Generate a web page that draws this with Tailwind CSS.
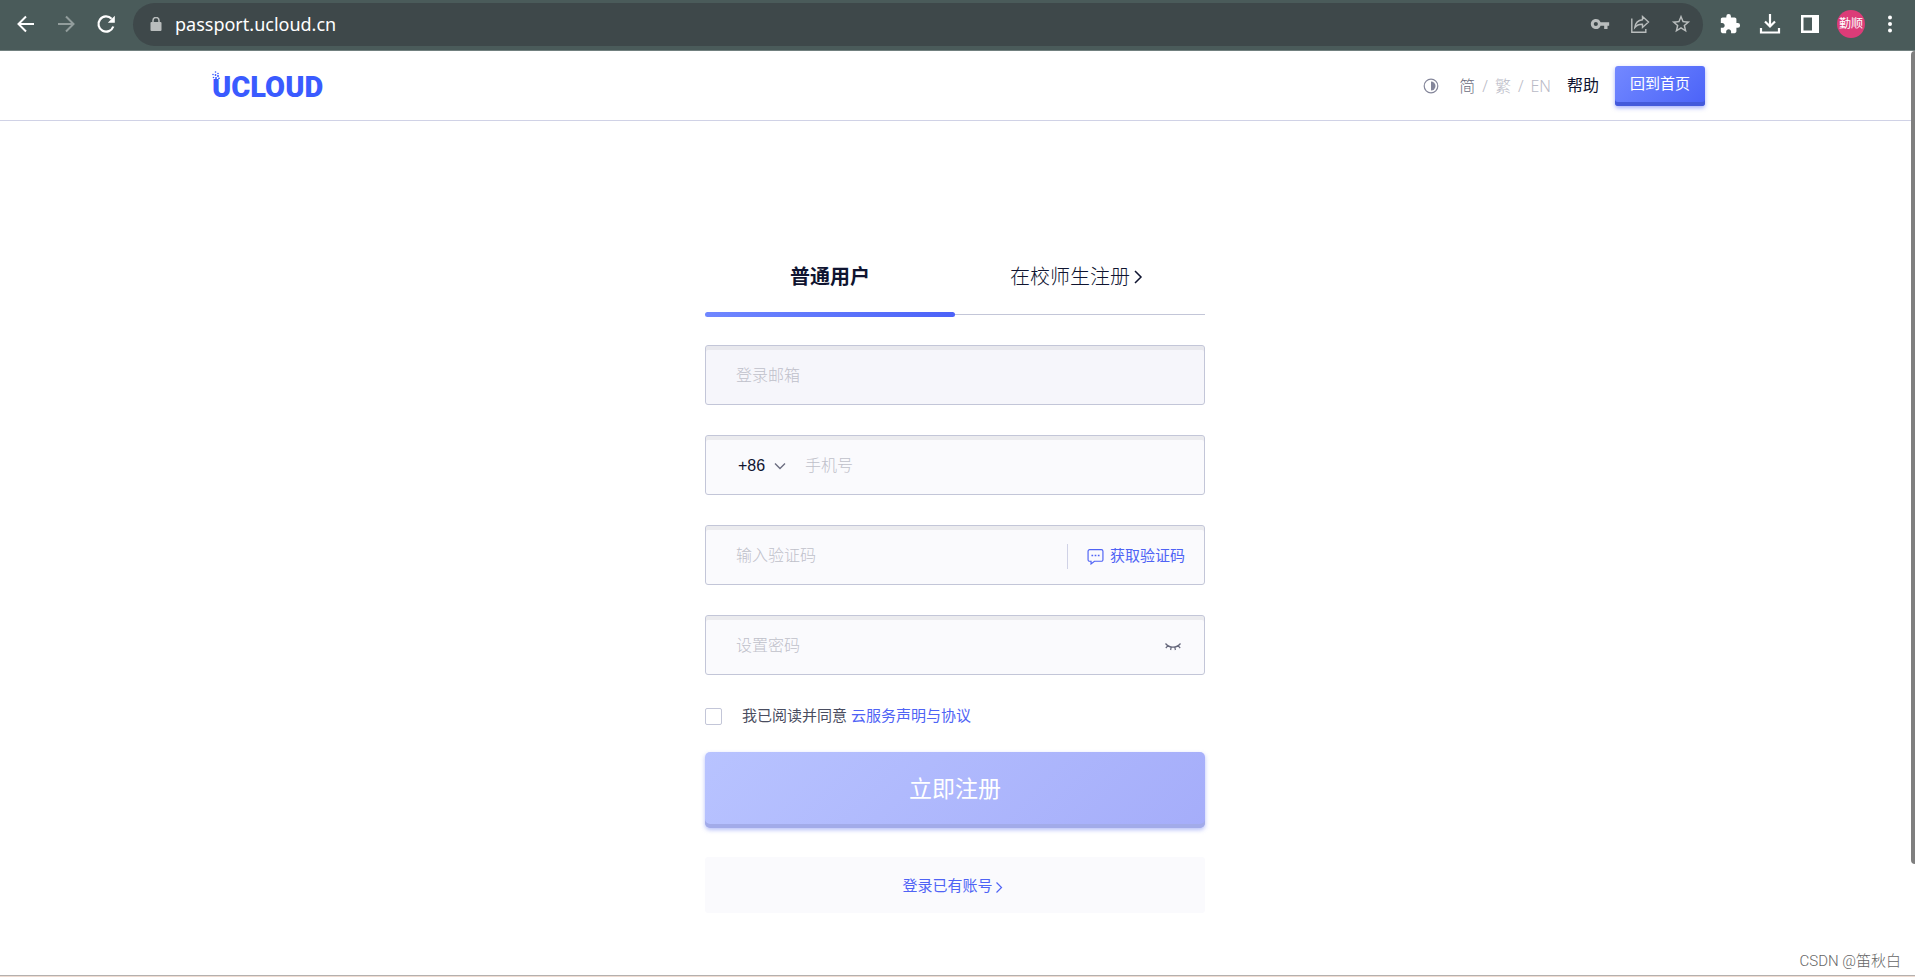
<!DOCTYPE html>
<html lang="zh-CN">
<head>
<meta charset="utf-8">
<meta name="viewport" content="width=device-width, initial-scale=1">
<title>UCloud</title>
<script src="https://cdn.jsdelivr.net/npm/@tailwindcss/browser@4"></script>
</head>
<body class="flex min-h-screen flex-col bg-white font-['Liberation_Sans','Noto_Sans_CJK_SC',sans-serif] text-[#0f1430]">

<!-- Browser toolbar -->
<div class="flex h-[51px] shrink-0 items-center border-b border-[#71807f] bg-[#4a5b5a] pr-[14px] pb-[2px] pl-[14px] text-white">
  <nav class="flex items-center gap-4" aria-label="浏览器导航">
    <button type="button" aria-label="后退"><svg class="size-6" viewBox="0 0 24 24" fill="none" stroke="currentColor" stroke-width="2"><path d="M20 12H5M12 4.500 4.500 12 12 19.500"/></svg></button>
    <button type="button" aria-label="前进" class="text-[#929d9c]"><svg class="size-6" viewBox="0 0 24 24" fill="none" stroke="currentColor" stroke-width="2"><path d="M4 12h15M12 4.500 19.500 12 12 19.500"/></svg></button>
    <button type="button" aria-label="重新加载"><svg class="size-6" viewBox="0 0 24 24" fill="none" stroke="currentColor" stroke-width="2.200"><path d="M19.300 14.500A7.600 7.600 0 1 1 17.600 6.800"/><path d="M20.800 3.800v7h-7z" fill="currentColor" stroke="none"/></svg></button>
  </nav>
  <div class="ml-[15px] flex h-[43px] flex-1 items-center rounded-full bg-[#3e484a] pr-[11px] pl-4 text-[#b9bdbd]">
    <svg class="size-[14px]" viewBox="0 0 14 14"><rect x="1.500" y="5" width="11" height="9" rx="1" fill="currentColor"/><path d="M4 5.500V3.500a3 3 0 0 1 6 0v2" fill="none" stroke="currentColor" stroke-width="1.500"/></svg>
    <input type="text" aria-label="地址" value="passport.ucloud.cn" class="ml-3 min-w-0 flex-1 bg-transparent font-['Noto_Sans',sans-serif] text-lg text-white outline-none">
    <div class="flex items-center gap-5">
      <button type="button" aria-label="密码"><svg class="size-5" viewBox="0 0 24 24" fill="currentColor"><path d="M12.700 10A6 6 0 0 0 7 6c-3.300 0-6 2.700-6 6s2.700 6 6 6a6 6 0 0 0 5.700-4H17v4h4v-4h2v-4H12.700zM7 14.500a2.500 2.500 0 1 1 0-5 2.500 2.500 0 0 1 0 5z"/></svg></button>
      <button type="button" aria-label="分享"><svg class="size-5" viewBox="0 0 20 20" fill="none" stroke="currentColor" stroke-width="1.400"><path d="M1.800 4.500v13.800h14V15"/><path d="M12.500 2.500 18.500 8l-6 5.500v-3.200c-3.500-.2-5.800.900-7.700 3.200.5-4.500 3.200-7.300 7.700-7.800z"/></svg></button>
      <button type="button" aria-label="收藏"><svg class="size-[22px]" viewBox="0 0 24 24" fill="currentColor"><path d="M22 9.240l-7.190-.620L12 2 9.190 8.630 2 9.240l5.460 4.730L5.820 21 12 17.270 18.180 21l-1.630-7.030L22 9.240zM12 15.400l-3.760 2.270 1-4.280-3.320-2.880 4.380-.380L12 6.100l1.710 4.040 4.380.380-3.320 2.880 1 4.280L12 15.400z"/></svg></button>
    </div>
  </div>
  <div class="ml-4 flex items-center gap-[18px]">
    <button type="button" aria-label="扩展程序"><svg class="size-[22px]" viewBox="0 0 24 24" fill="currentColor"><path d="M20.500 11H19V7c0-1.100-.9-2-2-2h-4V3.500a2.500 2.500 0 0 0-5 0V5H4c-1.100 0-1.990.9-1.990 2v3.800H3.500c1.490 0 2.700 1.210 2.700 2.700s-1.210 2.700-2.700 2.700H2V20c0 1.100.9 2 2 2h3.800v-1.500c0-1.490 1.210-2.700 2.700-2.700s2.700 1.210 2.700 2.700V22H17c1.100 0 2-.9 2-2v-4h1.500a2.500 2.500 0 0 0 0-5z"/></svg></button>
    <button type="button" aria-label="下载内容"><svg class="size-[22px]" viewBox="0 0 22 22" fill="none" stroke="currentColor" stroke-width="2.200"><path d="M11 1v12M6 8.500l5 5 5-5M2 15v4.500h18V15"/></svg></button>
    <button type="button" aria-label="侧边栏"><svg class="size-[22px]" viewBox="0 0 22 22" fill="currentColor"><path d="M2 2h18v18H2zM4.500 4.500v13H13v-13z" fill-rule="evenodd"/></svg></button>
    <button type="button" aria-label="用户" class="-mr-1 -ml-[2px] flex size-7 items-center justify-center rounded-full bg-[#dc3c78] text-xs">勤顺</button>
    <button type="button" aria-label="更多"><svg class="h-5 w-[22px]" viewBox="0 0 22 20" fill="currentColor"><circle cx="11" cy="3.500" r="2"/><circle cx="11" cy="10" r="2"/><circle cx="11" cy="16.500" r="2"/></svg></button>
  </div>
</div>

<!-- Page viewport -->
<div class="relative flex flex-1 flex-col border-b border-[#b4b0ae]">
  <header class="border-b border-[#d0d2e6] pr-[5px]">
    <div class="mx-auto flex h-[69px] max-w-[1500px] items-center justify-between">
      <a href="#" class="relative mt-[2px] ml-[7px] font-['Roboto',sans-serif] text-[29px] leading-8 font-black text-[#3a5bff]">UCLOUD<svg class="absolute top-0 left-0 size-2 bg-white" viewBox="0 0 8 8" fill="currentColor"><circle cx="1" cy="3.500" r=".8"/><circle cx="3.500" cy="1" r=".8"/><circle cx="6" cy="2.500" r=".8"/><circle cx="3.500" cy="4" r=".9"/><circle cx="1.500" cy="6.500" r=".8"/><circle cx="6" cy="5" r="1"/><circle cx="4" cy="7" r="1"/><circle cx="7" cy="7.300" r=".9"/></svg></a>
      <div class="flex items-center text-base">
        <button type="button" aria-label="切换主题" class="mr-5 text-[#84869a]"><svg class="size-4" viewBox="0 0 16 16"><circle cx="8" cy="8" r="6.800" fill="none" stroke="currentColor" stroke-width="1.200"/><path d="M8 3.500a4.500 4.500 0 0 1 0 9z" fill="currentColor"/></svg></button>
        <nav class="flex items-center gap-[7px] font-['Noto_Sans','Noto_Sans_CJK_SC',sans-serif] font-light text-[#b9bac6]" aria-label="语言">
          <a href="#" class="text-[#6b6d7d]">简</a><span>/</span><a href="#">繁</a><span>/</span><a href="#">EN</a>
        </nav>
        <a href="#" class="ml-4">帮助</a>
        <button type="button" class="ml-4 h-10 rounded-[3px] bg-linear-135 from-[#7388ff] to-[#4b62f8] px-[15px] pb-[2px] text-[15px] text-white shadow-[inset_0_-4px_0_#445adb,0_2px_4px_#4d64f880]">回到首页</button>
      </div>
    </div>
  </header>

  <div class="pr-[5px]">
  <main class="mx-auto w-full max-w-[500px] pt-[119px]">
    <div class="grid h-[77px] grid-cols-2 text-xl" role="tablist">
      <button type="button" role="tab" aria-selected="true" class="flex flex-col items-center justify-between font-bold">
        <span class="pt-[22px] leading-[30px]">普通用户</span>
        <span class="h-[5px] w-full rounded-full bg-linear-to-r from-[#7087ff] to-[#4c62f8]"></span>
      </button>
      <button type="button" role="tab" aria-selected="false" class="mb-[2px] flex items-start justify-center gap-[2px] border-b border-[#c3c6d8] pt-[22px] pr-[6px] leading-[30px] font-light">
        在校师生注册
        <svg class="mt-2 h-[14px] w-3" viewBox="0 0 12 14" fill="none" stroke="currentColor" stroke-width="1.500"><path d="M3 1l6 6-6 6"/></svg>
      </button>
    </div>

    <form class="mt-7">
      <div class="flex flex-col gap-[30px] text-base">
        <input type="email" aria-label="登录邮箱" placeholder="登录邮箱" class="h-[60px] rounded-[3px] border border-[#c3c6d8] bg-[#f6f6fb] pt-[2px] pl-[30px] font-light shadow-[inset_0_4px_0_#e8e8ed] outline-none placeholder:text-[#bfc0ca]">
        <div class="flex h-[60px] items-center rounded-[3px] border border-[#c3c6d8] bg-[#fafafd] pt-[2px] pl-8 shadow-[inset_0_4px_0_#ebebee]">
          <div class="relative flex w-[67px] items-center">
            <select aria-label="国家区号" class="w-full appearance-none bg-transparent outline-none"><option>+86</option></select>
            <svg class="pointer-events-none absolute left-9 h-2 w-3 text-[#6b6d80]" viewBox="0 0 12 8" fill="none" stroke="currentColor" stroke-width="1.400"><path d="M1 1.500l5 5 5-5"/></svg>
          </div>
          <input type="tel" aria-label="手机号" placeholder="手机号" class="min-w-0 flex-1 bg-transparent font-light outline-none placeholder:text-[#bfc0ca]">
        </div>
        <div class="flex h-[60px] items-center rounded-[3px] border border-[#c3c6d8] bg-[#fafafd] pt-[2px] pr-[19px] pl-[30px] shadow-[inset_0_4px_0_#ebebee]">
          <input type="text" aria-label="输入验证码" placeholder="输入验证码" class="min-w-0 flex-1 bg-transparent font-light outline-none placeholder:text-[#bfc0ca]">
          <button type="button" class="flex h-[25px] items-center gap-[6px] border-l border-[#d0d2e6] pl-[19px] text-[15px] text-[#4f63f5]">
            <svg class="size-[17px]" viewBox="0 0 16 16" fill="none" stroke="currentColor" stroke-width="1.100"><path d="M2.500 1.500h11a1.500 1.500 0 0 1 1.500 1.500v8a1.500 1.500 0 0 1-1.500 1.500H7L3.800 15v-2.500H2.500A1.500 1.500 0 0 1 1 11V3a1.500 1.500 0 0 1 1.500-1.500z"/><path d="M4.200 7h1.600m1.400 0h1.600m1.400 0h1.600" stroke-width="1.500"/></svg>
            获取验证码
          </button>
        </div>
        <div class="flex h-[60px] items-center rounded-[3px] border border-[#c3c6d8] bg-[#fafafd] pt-[2px] pr-[23px] pl-[30px] shadow-[inset_0_4px_0_#ebebee]">
          <input type="password" aria-label="设置密码" placeholder="设置密码" class="min-w-0 flex-1 bg-transparent font-light outline-none placeholder:text-[#bfc0ca]">
          <button type="button" aria-label="显示密码" class="text-[#64667a]"><svg class="size-4" viewBox="0 0 16 16" fill="none" stroke="currentColor" stroke-width="1.200"><path d="M.5 5.500C4.500 10.400 11.500 10.400 15.500 5.500M2.800 7.800.8 10M13.200 7.800l2 2.200M6.200 9.200 5.600 12M9.800 9.200l.6 2.800"/></svg></button>
        </div>
      </div>

      <div class="mt-[29px] flex h-6 items-center text-[15px]">
        <input id="agree" type="checkbox" class="size-[17px] appearance-none rounded-[2px] border border-[#c3c6d8] bg-white checked:bg-[#4f63f5]">
        <label for="agree" class="ml-5 text-[#4a4d60]">我已阅读并同意</label>
        <a href="#" class="ml-1 text-[#4f63f5]">云服务声明与协议</a>
      </div>

      <button type="submit" class="mt-6 h-[76px] w-full rounded-[5px] bg-linear-135 from-[#b8c3ff] to-[#a5adfa] pb-[2px] text-[23px] text-white shadow-[inset_0_-4px_0_#a2abe9,0_2px_4px_#8c9af5a0]">立即注册</button>
      <a href="#" class="mt-[29px] flex h-14 items-center justify-center gap-[2px] rounded-[3px] bg-[#fafafd] pt-[2px] pr-[5px] text-[15px] text-[#4f63f5]">登录已有账号<svg class="mt-[2px] h-3 w-2" viewBox="0 0 8 12" fill="none" stroke="currentColor" stroke-width="1.200"><path d="M1.500 1.500 6.500 6.500l-5 5"/></svg></a>
    </form>
  </main>
  </div>

  <!-- Scroll thumb and watermark -->
  <div class="absolute top-0 right-0 h-[88%] w-1 rounded-l bg-[#7f7f7f]"></div>
  <p class="absolute right-[14px] bottom-1 font-['Roboto','Noto_Sans_CJK_SC',sans-serif] text-[15px] leading-5 font-light text-[#666]">CSDN @笛秋白</p>
</div>
<div class="h-px bg-[#efdcd2]"></div>
</body>
</html>
